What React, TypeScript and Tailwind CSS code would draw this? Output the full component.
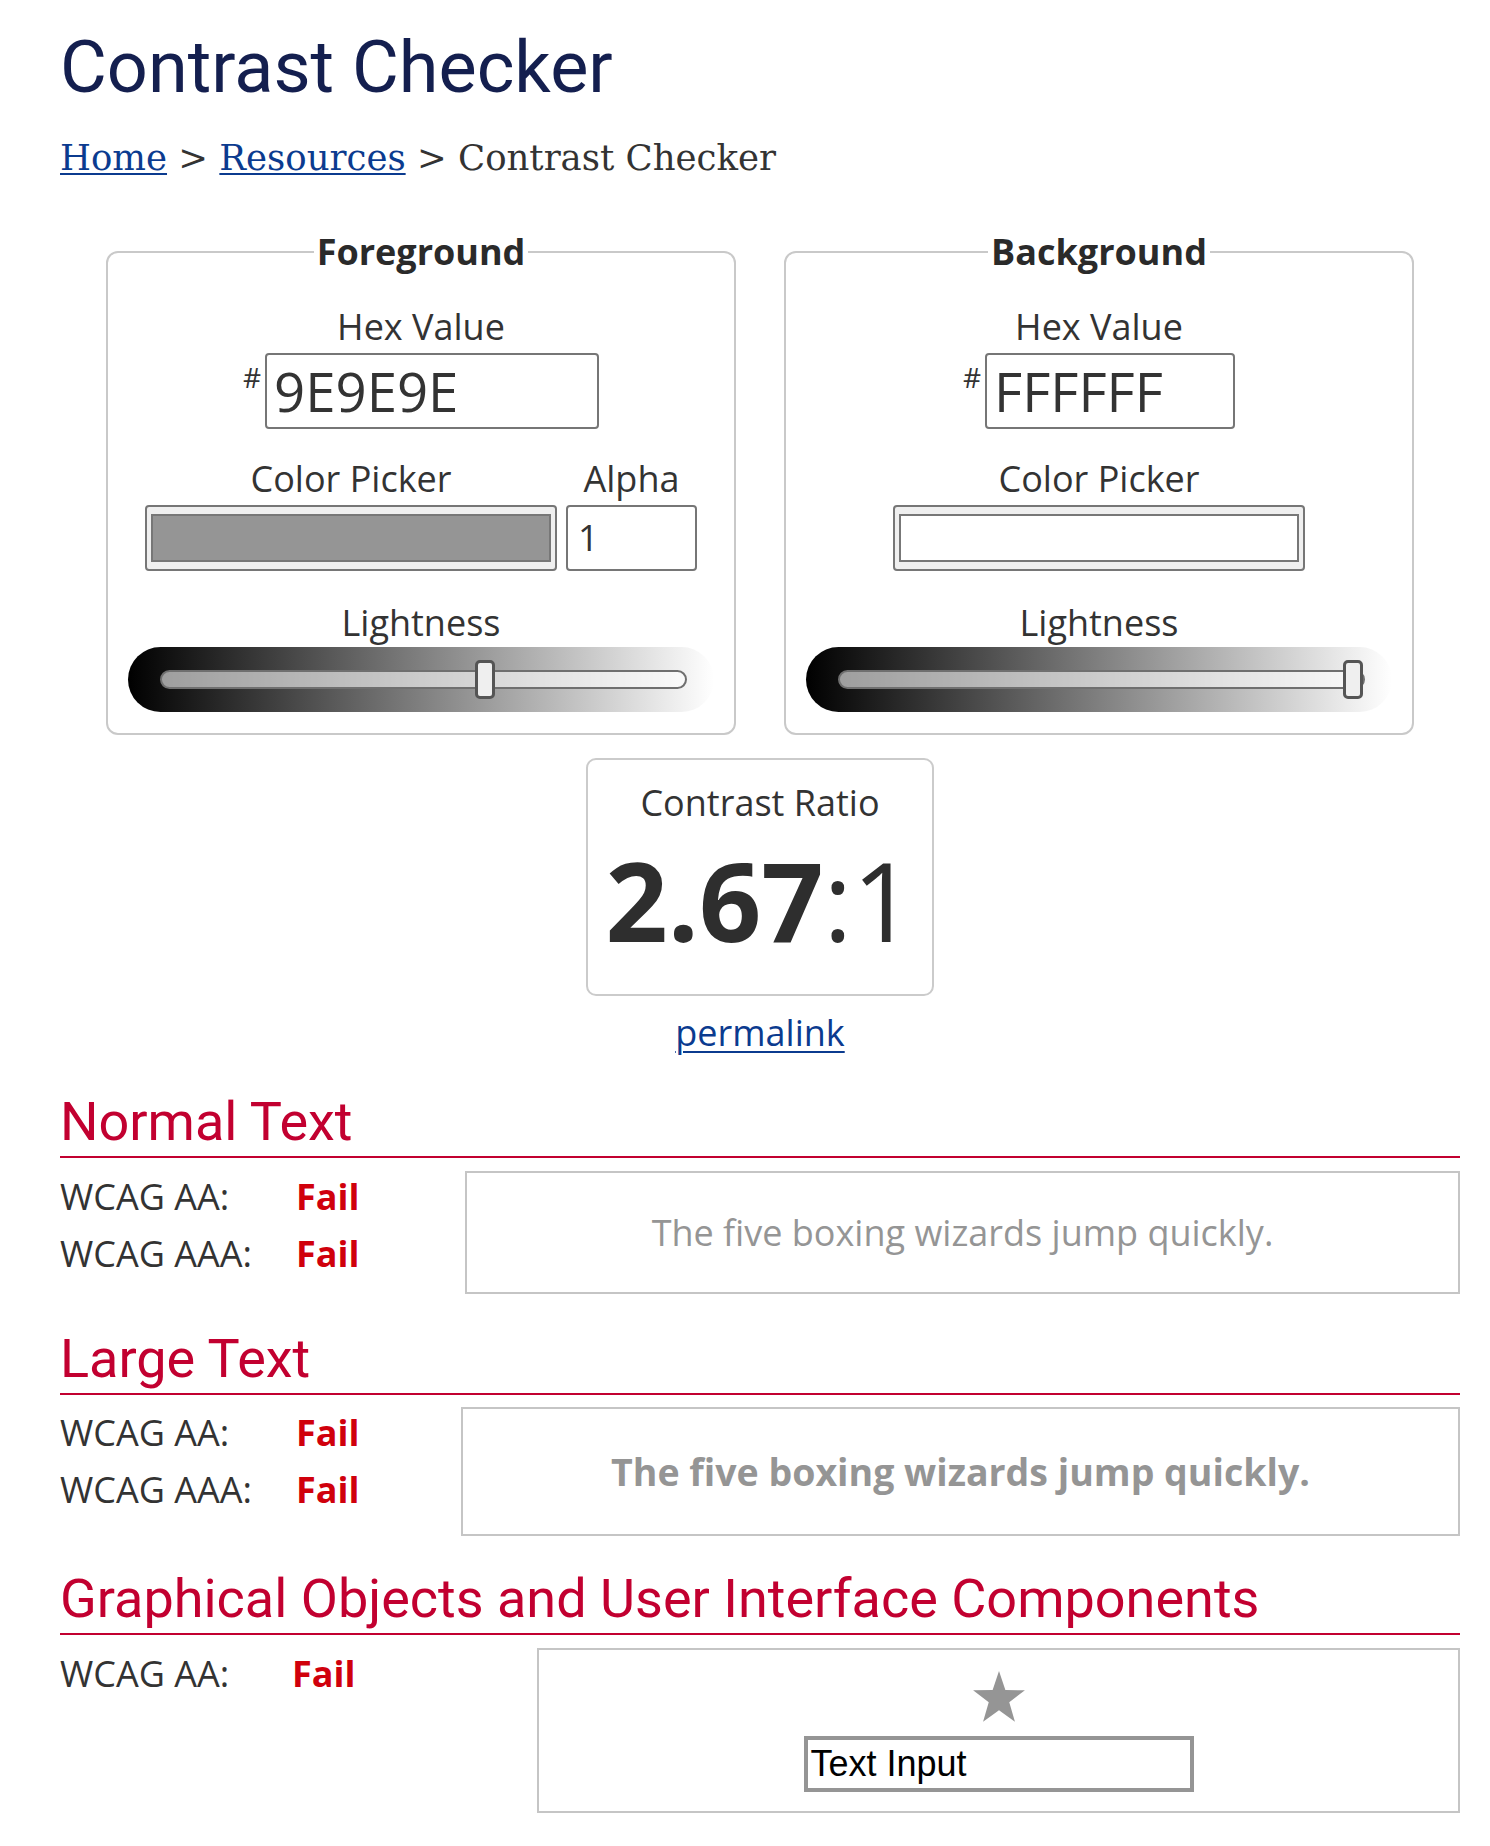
import React from "react";

function Slider({ thumbLeft }: { thumbLeft: number }) {
  return (
    <div className="flex h-[65px] w-[586px] items-center rounded-full bg-[linear-gradient(to_right,#000,#fff)] pl-[32px] pr-[27px]">
      <div className="relative h-[19px] flex-1 rounded-full border-2 border-[#6f6f6f] bg-[rgba(255,255,255,0.6)]">
        <div
          className="absolute top-[-12px] h-[39px] w-[20px] rounded-[5px] border-[3px] border-[#555] bg-[#efefef]"
          style={{ left: thumbLeft }}
        />
      </div>
    </div>
  );
}

function Fieldset({
  title,
  hex,
  hexWidth,
  swatch,
  alpha,
  thumbLeft,
}: {
  title: string;
  hex: string;
  hexWidth: string;
  swatch: string;
  alpha: boolean;
  thumbLeft: number;
}) {
  return (
    <fieldset className="w-[630px] rounded-[12px] border-2 border-[#c9c9c9] pb-[21px] pt-[27px]">
      {/* @ts-ignore */}
      <legend align="center" className="mx-auto px-[3px] text-[36px] font-bold leading-[48px] text-[#2a2a2a]">
        {title}
      </legend>
      <div className="flex flex-col items-center">
        <div className="leading-[48px]">Hex Value</div>
        <div className="mt-[2px] flex items-start">
          <span className="mr-[4px] mt-[5px] text-[28px] leading-[38px]">#</span>
          <div
            className={`${hexWidth} h-[76px] rounded-[4px] border-2 border-[#767676] px-[7px] text-[54.5px] leading-[72px] text-[#333]`}
          >
            {hex}
          </div>
        </div>
        <div className="mt-[26px] flex gap-[9px]">
          <div className="flex flex-col items-center">
            <div className="leading-[48px]">Color Picker</div>
            <div className="mt-[2px] h-[66px] w-[412px] rounded-[4px] border-2 border-[#767676] bg-[#efefef] px-[4px] py-[7px]">
              <div className={`h-full w-full border-2 border-[#777] ${swatch}`} />
            </div>
          </div>
          {alpha && (
            <div className="flex flex-col items-center">
              <div className="leading-[48px]">Alpha</div>
              <div className="mt-[2px] h-[66px] w-[131px] rounded-[4px] border-2 border-[#767676] px-[10px] leading-[62px]">
                1
              </div>
            </div>
          )}
        </div>
        <div className="mt-[28px] leading-[48px]">Lightness</div>
        <Slider thumbLeft={thumbLeft} />
      </div>
    </fieldset>
  );
}

function Heading({ children, mt }: { children: React.ReactNode; mt: string }) {
  return (
    <h2
      className={`${mt} border-b-2 border-[#c20030] pb-[3px] font-['Roboto',sans-serif] text-[54px] font-normal leading-[62px] text-[#c20030]`}
    >
      {children}
    </h2>
  );
}

function Result({ label, narrow }: { label: string; narrow?: boolean }) {
  return (
    <div className="flex leading-[57px]">
      <span className={narrow ? "w-[232px]" : "w-[236px]"}>{label}</span>
      <span className="font-bold text-[#d0000c]">Fail</span>
    </div>
  );
}

export default function App() {
  return (
    <div className="min-h-[1846px] w-[1490px] bg-white font-['Open_Sans',sans-serif] text-[36px] text-[#333]">
      <div className="ml-[60px] w-[1400px] pt-[25px]">
        <h1 className="font-['Roboto',sans-serif] text-[72px] font-normal leading-[86px] text-[#141f4f]">
          Contrast Checker
        </h1>
        <nav className="mt-[26px] font-['DejaVu_Serif',serif] text-[35.5px] leading-[41px] text-[#333]">
          <a href="#" className="text-[#0b3b8f] underline decoration-2 underline-offset-[3px]">
            Home
          </a>{" "}
          &gt;{" "}
          <a href="#" className="text-[#0b3b8f] underline decoration-2 underline-offset-[3px]">
            Resources
          </a>{" "}
          &gt; Contrast Checker
        </nav>

        <div className="mt-[50px] flex justify-center gap-[48px]">
          <Fieldset
            title="Foreground"
            hex="9E9E9E"
            hexWidth="w-[334px]"
            swatch="bg-[#959595]"
            alpha={true}
            thumbLeft={313}
          />
          <Fieldset
            title="Background"
            hex="FFFFFF"
            hexWidth="w-[250px]"
            swatch="bg-white"
            alpha={false}
            thumbLeft={503}
          />
        </div>

        <div className="mx-auto mt-[23px] flex h-[238px] w-[348px] flex-col items-center rounded-[10px] border-2 border-[#cbcbcb] pt-[19px]">
          <div className="leading-[48px]">Contrast Ratio</div>
          <div className="mt-[17px] text-[109px] leading-[112px] text-[#2e2e2e]">
            <span className="font-bold">2.67</span>:1
          </div>
        </div>
        <div className="mt-[13px] text-center leading-[48px]">
          <a href="#" className="text-[#0b3b8f] underline decoration-2 underline-offset-[5px]">
            permalink
          </a>
        </div>

        <Heading mt="mt-[34px]">Normal Text</Heading>
        <div className="mt-[10px] flex items-start">
          <div className="w-[405px]">
            <Result label="WCAG AA:" />
            <Result label="WCAG AAA:" />
          </div>
          <div className="mt-[3px] flex h-[123px] flex-1 items-center justify-center border-2 border-[#c5c5c5] leading-[48px] text-[#959595]">
            The five boxing wizards jump quickly.
          </div>
        </div>

        <Heading mt="mt-[34px]">Large Text</Heading>
        <div className="mt-[9px] flex items-start">
          <div className="w-[401px]">
            <Result label="WCAG AA:" />
            <Result label="WCAG AAA:" />
          </div>
          <div className="mt-[3px] flex h-[129px] flex-1 items-center justify-center border-2 border-[#c5c5c5] text-[37.5px] font-bold leading-[48px] text-[#959595]">
            The five boxing wizards jump quickly.
          </div>
        </div>

        <Heading mt="mt-[32px]">Graphical Objects and User Interface Components</Heading>
        <div className="mt-[10px] flex items-start">
          <div className="w-[477px]">
            <Result label="WCAG AA:" narrow />
          </div>
          <div className="mt-[3px] flex h-[165px] flex-1 flex-col items-center border-2 border-[#c5c5c5] pt-[21px]">
            <svg width="54" height="52" viewBox="0 0 100 96" className="block">
              <polygon
                points="50,0 61.8,35 98,35.5 69,57.5 79.5,94 50,72.5 20.5,94 31,57.5 2,35.5 38.2,35"
                fill="#959595"
              />
            </svg>
            <div className="mt-[13px] h-[56px] w-[390px] border-4 border-[#959595] pl-[3px] font-['Liberation_Sans',Arial,sans-serif] text-[36px] leading-[48px] text-black">
              Text Input
            </div>
          </div>
        </div>
      </div>
    </div>
  );
}
